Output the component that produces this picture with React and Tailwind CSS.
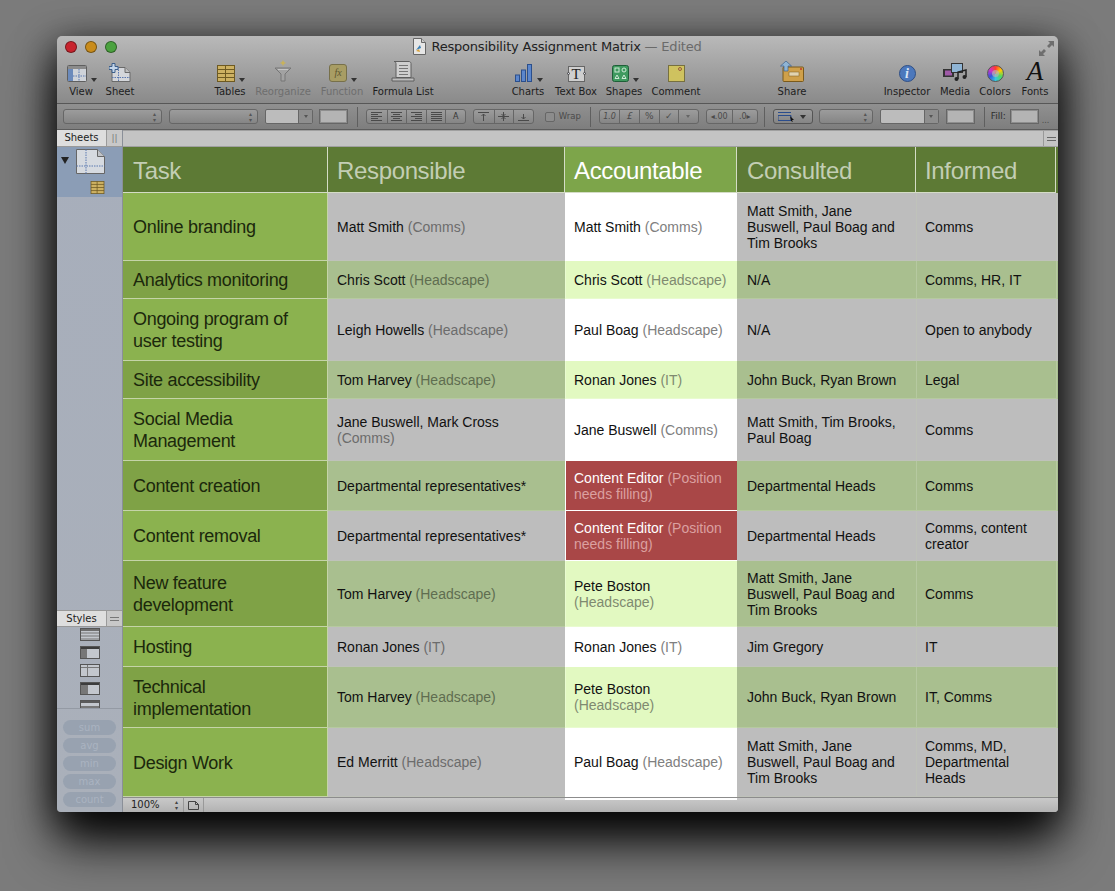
import React from "react";

const uiFont = "font-['DejaVu_Sans',sans-serif]";

const rows = [
  { h: "h-[68px]", task: ["Online branding"], resp: ["Matt Smith", "(Comms)"], acc: ["Matt Smith", "(Comms)"], cons: "Matt Smith, Jane Buswell, Paul Boag and Tim Brooks", inf: "Comms" },
  { h: "h-[38px]", task: ["Analytics monitoring"], resp: ["Chris Scott", "(Headscape)"], acc: ["Chris Scott", "(Headscape)"], cons: "N/A", inf: "Comms, HR, IT" },
  { h: "h-[62px]", task: ["Ongoing program of", "user testing"], resp: ["Leigh Howells", "(Headscape)"], acc: ["Paul Boag", "(Headscape)"], cons: "N/A", inf: "Open to anybody" },
  { h: "h-[38px]", task: ["Site accessibility"], resp: ["Tom Harvey", "(Headscape)"], acc: ["Ronan Jones", "(IT)"], cons: "John Buck, Ryan Brown", inf: "Legal" },
  { h: "h-[62px]", task: ["Social Media", "Management"], resp: ["Jane Buswell, Mark Cross", "(Comms)"], acc: ["Jane Buswell", "(Comms)"], cons: "Matt Smith, Tim Brooks, Paul Boag", inf: "Comms" },
  { h: "h-[50px]", task: ["Content creation"], resp: ["Departmental representatives*", ""], acc: ["Content Editor", "(Position", "needs filling)"], red: true, cons: "Departmental Heads", inf: "Comms" },
  { h: "h-[50px]", task: ["Content removal"], resp: ["Departmental representatives*", ""], acc: ["Content Editor", "(Position", "needs filling)"], red: true, cons: "Departmental Heads", inf: "Comms, content creator" },
  { h: "h-[66px]", task: ["New feature", "development"], resp: ["Tom Harvey", "(Headscape)"], acc: ["Pete Boston", "(Headscape)"], cons: "Matt Smith, Jane Buswell, Paul Boag and Tim Brooks", inf: "Comms" },
  { h: "h-[40px]", task: ["Hosting"], resp: ["Ronan Jones", "(IT)"], acc: ["Ronan Jones", "(IT)"], cons: "Jim Gregory", inf: "IT" },
  { h: "h-[61px]", task: ["Technical", "implementation"], resp: ["Tom Harvey", "(Headscape)"], acc: ["Pete Boston", "(Headscape)"], cons: "John Buck, Ryan Brown", inf: "IT, Comms" },
  { h: "h-[69px]", task: ["Design Work"], resp: ["Ed Merritt", "(Headscape)"], acc: ["Paul Boag", "(Headscape)"], cons: "Matt Smith, Jane Buswell, Paul Boag and Tim Brooks", inf: "Comms, MD, Departmental Heads" },
];

const cols = "grid grid-cols-[205px_237px_172px_179px_140px_2px]";

function Traffic({ className }) {
  return <span className={`w-[12px] h-[12px] rounded-full border border-black/40 ${className}`} />;
}

function DocIcon() {
  return (
    <svg width="13" height="17" viewBox="0 0 13 17">
      <path d="M.5.5h8l4 4v12H.5z" fill="#e6e6e6" stroke="#666" />
      <path d="M8.5.5v4h4" fill="#ccc" stroke="#666" />
      <path d="M3 12l4-5 1 3z" fill="#3a7fb5" />
      <path d="M3 13l3-2 1 3z" fill="#d9a13a" />
    </svg>
  );
}

function Caret() {
  return <span className="w-0 h-0 border-x-[3.5px] border-x-transparent border-t-[4px] border-t-[#333]" />;
}

function ViewIcon() {
  return (
    <svg width="20" height="17" viewBox="0 0 20 17">
      <rect x=".5" y=".5" width="19" height="16" rx="1" fill="#cfd3d9" stroke="#5f5f5f" />
      <rect x="1" y="1" width="18" height="3" fill="#8b8b8b" />
      <rect x="1" y="4" width="5" height="12" fill="#6b8abb" />
      <path d="M6 11h13M12 4v12" stroke="#5a78b0" strokeDasharray="1.5 1" />
    </svg>
  );
}

function SheetIcon() {
  return (
    <svg width="22" height="19" viewBox="0 0 22 19">
      <path d="M3 4.500h13l5 5v9H3z" fill="#d4d6da" stroke="#6a6a6a" />
      <path d="M16 4.500v5h5" fill="#bdbdbd" stroke="#6a6a6a" />
      <path d="M3 14.500h18M9.500 4v14" stroke="#5a78b0" strokeDasharray="1.5 1" />
      <path d="M3 .5h3v3h3v3H6v3H3v-3H0v-3h3z" fill="#c4d6ea" stroke="#3d5f8a" />
    </svg>
  );
}

function TablesIcon({ w = 18, h = 17 }) {
  return (
    <svg width={w} height={h} viewBox="0 0 18 17">
      <rect x=".5" y=".5" width="17" height="16" fill="#cdb162" stroke="#6e5a22" />
      <path d="M.5 4.500h17M.5 8.500h17M.5 12.500h17M8.500 .5v16" stroke="#6e5a22" />
    </svg>
  );
}

function FunnelIcon() {
  return (
    <svg width="20" height="22" viewBox="0 0 20 22">
      <path d="M10 0l1 2 2 1-2 1-1 2-1-2-2-1 2-1z" fill="#c9b25a" />
      <path d="M2 8h16l-6 6v7H8v-7z" fill="#a2a2a2" stroke="#767676" />
      <path d="M5 9.500h10" stroke="#c4c4c4" />
    </svg>
  );
}

function FunctionIcon() {
  return (
    <div className="w-[18px] h-[18px] rounded-[3px] bg-[#a89d64] border border-[#77704a] flex items-center justify-center">
      <span className="font-['Liberation_Serif',serif] italic text-[10px] leading-none text-[#5d5630]">fx</span>
    </div>
  );
}

function FormulaListIcon() {
  return (
    <svg width="24" height="21" viewBox="0 0 24 21">
      <path d="M3 .5h15c1 0 2 1 2 2v14H5V2.500C5 1.500 4 .5 3 .5z" fill="#cfcfcf" stroke="#5f5f5f" />
      <path d="M8 4.500h9M8 7.500h9M8 10.500h9M8 13.500h9" stroke="#777" />
      <path d="M1 17h22v3H1z" fill="#bdbdbd" stroke="#5f5f5f" />
    </svg>
  );
}

function ChartsIcon() {
  return (
    <svg width="18" height="18" viewBox="0 0 18 18">
      <rect x=".5" y="11" width="4" height="6.500" fill="#5b86cc" stroke="#2b4f8c" />
      <rect x="6.500" y="6" width="4" height="11.500" fill="#5b86cc" stroke="#2b4f8c" />
      <rect x="12.500" y=".5" width="4" height="17" fill="#5b86cc" stroke="#2b4f8c" />
    </svg>
  );
}

function TextBoxIcon() {
  return (
    <div className="relative w-[17px] h-[16px] bg-[#cfcfcf] border border-[#666] flex items-center justify-center">
      <span className="font-['Liberation_Serif',serif] text-[15px] leading-none text-[#222]">T</span>
      <span className="absolute -left-[2px] top-[5px] w-[3px] h-[3px] rounded-full bg-[#dde] border-[0.5px] border-[#444]" />
      <span className="absolute -right-[2px] top-[5px] w-[3px] h-[3px] rounded-full bg-[#dde] border-[0.5px] border-[#444]" />
    </div>
  );
}

function ShapesIcon() {
  return (
    <svg width="17" height="17" viewBox="0 0 17 17">
      <rect x=".5" y=".5" width="16" height="16" rx="2" fill="#3f9a5f" stroke="#1f5f38" />
      <rect x="3" y="3" width="4" height="4" fill="none" stroke="#cfe9d6" />
      <circle cx="12" cy="5" r="2" fill="none" stroke="#cfe9d6" />
      <path d="M5 10l2 3.500H3zM12 10l2 3.500h-4z" fill="none" stroke="#cfe9d6" />
    </svg>
  );
}

function CommentIcon() {
  return (
    <div className="relative w-[17px] h-[17px] bg-[#cfc25f] border border-[#77703f]">
      <span className="absolute top-[1px] right-[2px] w-[4px] h-[4px] rounded-full border border-[#9a5a3a]" />
    </div>
  );
}

function ShareIcon() {
  return (
    <svg width="24" height="21" viewBox="0 0 24 21">
      <rect x="3" y="6" width="20.500" height="14.500" rx="1" fill="#cfa04a" stroke="#7a5a1c" />
      <rect x="9" y="11" width="10" height="4" fill="#e2d4b0" stroke="#7a5a1c" strokeWidth=".5" />
      <circle cx="21" cy="8" r="1" fill="#c0392b" />
      <path d="M6 0l5.500 5H8v5H4V5H.5z" fill="#8fb4d4" stroke="#3d5f8a" strokeWidth=".7" />
    </svg>
  );
}

function InspectorIcon() {
  return (
    <div className="w-[17px] h-[17px] rounded-full bg-[#4c78bc] border border-[#2f4f85] flex items-center justify-center">
      <span className="font-['Liberation_Serif',serif] italic font-bold text-[14px] leading-none text-[#dbe6f5]">i</span>
    </div>
  );
}

function MediaIcon() {
  return (
    <svg width="25" height="19" viewBox="0 0 25 19">
      <rect x="0" y="6" width="11" height="8" fill="#333" />
      <rect x="2" y="7.500" width="7" height="5" fill="#a05aa8" />
      <rect x="8.500" y=".5" width="11" height="9" fill="#8fb4d4" stroke="#333" />
      <path d="M15 16V9l8-2v7" fill="none" stroke="#222" strokeWidth="1.500" />
      <circle cx="13.500" cy="16" r="2" fill="#222" />
      <circle cx="21.500" cy="14" r="2" fill="#222" />
    </svg>
  );
}

function ColorsIcon() {
  return (
    <div className="w-[17px] h-[17px] rounded-full border border-[#555] bg-[conic-gradient(#ff3b30,#ffcc00,#4cd964,#34c8e0,#3355dd,#cc33cc,#ff3b30)] flex items-center justify-center">
      <span className="w-[7px] h-[7px] rounded-full bg-[#b5b5b5]/70" />
    </div>
  );
}

function FontsIcon() {
  return <span className="font-['Liberation_Serif',serif] italic text-[27px] leading-[22px] text-[#111]">A</span>;
}

const toolbar = [
  { label: "View", w: "w-[40px]", icon: <ViewIcon />, caret: true },
  { label: "Sheet", w: "w-[38px]", icon: <SheetIcon /> },
  { label: "Tables", w: "w-[50px] ml-[66px]", icon: <TablesIcon />, caret: true },
  { label: "Reorganize", w: "w-[56px]", icon: <FunnelIcon />, off: true },
  { label: "Function", w: "w-[62px]", icon: <FunctionIcon />, caret: true, off: true },
  { label: "Formula List", w: "w-[60px]", icon: <FormulaListIcon /> },
  { label: "Charts", w: "w-[48px] ml-[71px]", icon: <ChartsIcon />, caret: true },
  { label: "Text Box", w: "w-[48px]", icon: <TextBoxIcon /> },
  { label: "Shapes", w: "w-[48px]", icon: <ShapesIcon />, caret: true },
  { label: "Comment", w: "w-[56px]", icon: <CommentIcon /> },
  { label: "Share", w: "w-[50px] ml-[63px]", icon: <ShareIcon /> },
  { label: "Inspector", w: "w-[56px] ml-[62px]", icon: <InspectorIcon /> },
  { label: "Media", w: "w-[40px]", icon: <MediaIcon /> },
  { label: "Colors", w: "w-[40px]", icon: <ColorsIcon /> },
  { label: "Fonts", w: "w-[40px]", icon: <FontsIcon /> },
];

function ToolItem({ item }) {
  return (
    <div className={`${item.w} flex flex-col items-center shrink-0`}>
      <div className="h-[22px] flex items-end justify-center">
        <div className={`relative flex ${item.caret ? "mr-[8px]" : ""}`}>
          {item.icon}
          {item.caret && <span className="absolute left-full ml-[4px] bottom-[0px] flex"><Caret /></span>}
        </div>
      </div>
      <span className={`mt-[3px] text-[10px] leading-[14px] whitespace-nowrap ${item.off ? "text-[#6e6e6e]" : "text-[#1d1d1d]"}`}>{item.label}</span>
    </div>
  );
}

function Select({ w }) {
  return (
    <div className={`${w} h-[15px] rounded-[3px] border border-[#666] bg-gradient-to-b from-[#9c9c9c] to-[#858585] flex items-center justify-end pr-[5px]`}>
      <span className="text-[6px] leading-[6px] text-[#555] flex flex-col items-center">
        <span>▴</span>
        <span>▾</span>
      </span>
    </div>
  );
}

function Combo({ w }) {
  return (
    <div className={`${w} h-[15px] rounded-[2px] border border-[#666] bg-[#bcbcbc] flex justify-end`}>
      <div className="w-[14px] h-full bg-[#8e8e8e] border-l border-[#666] flex items-center justify-center">
        <span className="w-0 h-0 border-x-[2.500px] border-x-transparent border-t-[3px] border-t-[#555]" />
      </div>
    </div>
  );
}

function Box() {
  return <div className="w-[29px] h-[15px] border border-[#666] bg-[#b4b4b4] shadow-[inset_0_0_0_1px_#8e8e8e]" />;
}

function Sep() {
  return <div className="w-px h-[20px] bg-[#5f5f5f]" />;
}

function Seg({ children, w = "w-[19.6px]" }) {
  return (
    <div className={`${w} h-full flex items-center justify-center border-l border-[#666] first:border-l-0 text-[9px] text-[#4a4a4a]`}>
      {children}
    </div>
  );
}

function Segments({ children }) {
  return <div className="h-[15px] flex rounded-[3px] border border-[#666] bg-gradient-to-b from-[#9c9c9c] to-[#858585]">{children}</div>;
}

function AlignGlyph({ d }) {
  return (
    <svg width="11" height="9" viewBox="0 0 11 9">
      <path d={d} stroke="#4a4a4a" fill="none" />
    </svg>
  );
}

function FormatBar() {
  return (
    <div className={`h-[26px] shrink-0 pl-[6px] flex items-center bg-gradient-to-b from-[#909090] to-[#7e7e7e] border-b border-[#5c5c5c] ${uiFont}`}>
      <Select w="w-[99px]" />
      <div className="ml-[7px]"><Select w="w-[89px]" /></div>
      <div className="ml-[7px]"><Combo w="w-[48px]" /></div>
      <div className="ml-[6px]"><Box /></div>
      <div className="ml-[9px]"><Sep /></div>
      <div className="ml-[8px]">
        <Segments>
          <Seg><AlignGlyph d="M0 .5h11M0 2.500h7M0 4.500h11M0 6.500h7M0 8.500h11" /></Seg>
          <Seg><AlignGlyph d="M0 .5h11M2 2.500h7M0 4.500h11M2 6.500h7M0 8.500h11" /></Seg>
          <Seg><AlignGlyph d="M0 .5h11M4 2.500h7M0 4.500h11M4 6.500h7M0 8.500h11" /></Seg>
          <Seg><AlignGlyph d="M0 .5h11M0 2.500h11M0 4.500h11M0 6.500h11M0 8.500h11" /></Seg>
          <Seg><span className="text-[8px] leading-none text-[#333]">A</span></Seg>
        </Segments>
      </div>
      <div className="ml-[7px]">
        <Segments>
          <Seg><AlignGlyph d="M0 .5h11M5.500 2v7M3.500 4l2-2 2 2" /></Seg>
          <Seg><AlignGlyph d="M0 4.500h11M5.500 0v9M3.500 2l2 2 2-2M3.500 7l2-2 2 2" /></Seg>
          <Seg><AlignGlyph d="M0 8.500h11M5.500 2v5M3.500 5l2 2 2-2" /></Seg>
        </Segments>
      </div>
      <div className="ml-[11px] w-[10px] h-[10px] rounded-[2px] border border-[#666] bg-[#8c8c8c]" />
      <span className="ml-[4px] w-[23px] text-[8.5px] leading-none text-[#4a4a4a]">Wrap</span>
      <div className="ml-[8px]"><Sep /></div>
      <div className="ml-[8px]">
        <Segments>
          <Seg><span className="italic text-[8px]">1.0</span></Seg>
          <Seg><span className="italic">£</span></Seg>
          <Seg>%</Seg>
          <Seg>✓</Seg>
          <Seg><span className="w-0 h-0 border-x-[2.500px] border-x-transparent border-t-[3px] border-t-[#666]" /></Seg>
        </Segments>
      </div>
      <div className="ml-[7px]">
        <Segments>
          <Seg w="w-[25px]"><span className="text-[8px]">◂.00</span></Seg>
          <Seg w="w-[25px]"><span className="text-[8px]">.0▸</span></Seg>
        </Segments>
      </div>
      <div className="ml-[6px]"><Sep /></div>
      <div className="ml-[8px] w-[40px] h-[15px] rounded-[3px] border border-[#555] bg-gradient-to-b from-[#9c9c9c] to-[#858585] flex items-center justify-between pl-[4px] pr-[6px]">
        <svg width="18" height="10" viewBox="0 0 18 10">
          <path d="M0 .5h13" stroke="#2b4d8c" />
          <path d="M0 3.500h13v5H0z" stroke="#2b4d8c" fill="none" />
          <path d="M12 4l4 4h-2l1 2-2-1z" fill="#111" />
        </svg>
        <Caret />
      </div>
      <div className="ml-[6px]"><Select w="w-[54px]" /></div>
      <div className="ml-[7px]"><Combo w="w-[59px]" /></div>
      <div className="ml-[7px]"><Box /></div>
      <div className="ml-[9px]"><Sep /></div>
      <span className="ml-[6px] w-[19px] text-[9px] leading-none text-[#2c2c2c]">Fill:</span>
      <Box />
      <span className="ml-[3px] mt-[8px] text-[8px] leading-none text-[#4a4a4a]">...</span>
    </div>
  );
}

function StyleThumb({ d, head }) {
  return (
    <svg width="20" height="13" viewBox="0 0 20 13" className="shrink-0">
      <rect x=".5" y=".5" width="19" height="12" fill="#c3c7cd" stroke="#555" />
      <rect x="1" y="1" width="18" height="2" fill={head} />
      <path d={d} fill="#777" />
    </svg>
  );
}

function Sidebar() {
  return (
    <div className={`w-[66px] shrink-0 flex flex-col border-r border-[#8a8f98] bg-gradient-to-b from-[#a7aebb] to-[#aab0ba] ${uiFont}`}>
      <div className="h-[17px] shrink-0 flex bg-[#c8c8c8] border-b border-[#999]">
        <div className="w-[50px] bg-[#dedede] border-r border-[#9a9a9a] flex items-center justify-center text-[10px] leading-none text-[#222]">Sheets</div>
        <div className="flex-1 flex items-center justify-center text-[9px] leading-none text-[#777]">||</div>
      </div>
      <div className="h-[50px] shrink-0 bg-[#8b9db6] relative flex pt-[2px] pl-[19px]">
        <span className="absolute left-[4px] top-[10px] w-0 h-0 border-x-[4px] border-x-transparent border-t-[7px] border-t-[#222]" />
        <div className="flex flex-col items-end">
          <svg width="29" height="25" viewBox="0 0 29 25">
            <path d="M.5.5h21l7 7v17H.5z" fill="#d6dae0" stroke="#666" />
            <path d="M21.500.5v7h7" fill="#c0c3c8" stroke="#666" />
            <path d="M.5 17h28M10 .5v24" stroke="#5a78b0" strokeDasharray="1.500 1" />
          </svg>
          <div className="mt-[7px] flex"><TablesIcon w={15} h={13} /></div>
        </div>
      </div>
      <div className="flex-1" />
      <div className="h-[17px] shrink-0 flex bg-[#c8c8c8] border-y border-[#999]">
        <div className="w-[50px] bg-[#dedede] border-r border-[#9a9a9a] flex items-center justify-center text-[10px] leading-none text-[#222]">Styles</div>
        <div className="flex-1 flex flex-col items-center justify-center gap-[2px]">
          <span className="w-[9px] h-px bg-[#777]" />
          <span className="w-[9px] h-px bg-[#777]" />
        </div>
      </div>
      <div className="h-[82px] shrink-0 pt-[1px] flex flex-col items-center gap-[5px] overflow-hidden border-b border-[#949aa4]">
        <StyleThumb head="#6e6e6e" d="M1 4.500h18v1H1zM1 7.500h18v1H1zM1 10.500h18v1H1z" />
        <StyleThumb head="#3c3c3c" d="M1 3h6v9H1z" />
        <StyleThumb head="#c3c7cd" d="M1 3h18v1H1zM7 1h1v11H7z" />
        <StyleThumb head="#3c3c3c" d="M1 3h7v9H1z" />
        <StyleThumb head="#5a5a5a" d="M1 6h18v2H1z" />
      </div>
      <div className="h-[103px] shrink-0 pt-[11px] flex flex-col items-center gap-[3px]">
        {["sum", "avg", "min", "max", "count"].map((f) => (
          <div key={f} className="w-[53px] h-[15px] rounded-full bg-[#98a2b0] flex items-center justify-center text-[10px] leading-none text-[#aab3c0]">
            {f}
          </div>
        ))}
      </div>
    </div>
  );
}

function Who({ parts, grey }) {
  return (
    <>
      {parts[0]}
      {parts[1] ? <span className={grey}> {parts[1]}</span> : null}
      {parts[2] ? <span className={`block ${grey}`}>{parts[2]}</span> : null}
    </>
  );
}

function Row({ row, index }) {
  const alt = index % 2 === 1;
  const task = alt ? "bg-[#7fa246]" : "bg-[#8bb24f]";
  const cell = alt ? "bg-[#a9bf8f] border-[#b6c9a0]" : "bg-[#bdbdbd] border-[#bfc2ba]";
  const acc = row.red ? "bg-[#a94747] text-white border-white" : alt ? "bg-[#e2f9c1] border-[#e9fbd0]" : "bg-white border-white";
  const accGrey = row.red ? "text-[#dba0a0]" : alt ? "text-[#7f8a70]" : "text-[#808080]";
  const grey = alt ? "text-[#5f6d50]" : "text-[#6c6c6c]";
  const base = "flex items-center border-b";
  return (
    <div className={`${cols} ${row.h} text-[14px] leading-[16px] text-[#111]`}>
      <div className={`${base} ${task} border-r border-[#c5d4a8] pl-[10px] pr-[9px] pt-[1px] text-[18px] leading-[22px] tracking-[-0.3px] text-[#1b280c]`}>
        <span>
          {row.task.map((t) => (
            <span key={t} className="block whitespace-nowrap">{t}</span>
          ))}
        </span>
      </div>
      <div className={`${base} ${cell} px-[9px]`}>
        <span><Who parts={row.resp} grey={grey} /></span>
      </div>
      <div className={`${base} ${acc} border-l pl-[8px] pr-[4px]`}>
        <span><Who parts={row.acc} grey={accGrey} /></span>
      </div>
      <div className={`${base} ${cell} px-[10px]`}>
        <span>{row.cons}</span>
      </div>
      <div className={`${base} ${cell} border-l pl-[8px] pr-[9px]`}>
        <span>{row.inf}</span>
      </div>
      <div className={`${cell} border-l`} />
    </div>
  );
}

function Sheet() {
  const heads = ["Task", "Responsible", "Accountable", "Consulted", "Informed"];
  return (
    <div className="flex-1 min-w-0 flex flex-col bg-[#bdbdbd] font-['Liberation_Sans',sans-serif]">
      <div className="h-[17px] shrink-0 flex justify-end bg-[#c4c4c4] border-y border-[#a0a0a0]">
        <div className="w-[15px] border-l border-[#999] flex flex-col items-center justify-center gap-[2px]">
          <span className="w-[9px] h-px bg-[#666]" />
          <span className="w-[9px] h-px bg-[#666]" />
        </div>
      </div>
      <div className="flex-1 min-h-0 overflow-hidden">
        <div className={`${cols} h-[46px] text-[24px] leading-none tracking-[-0.35px]`}>
          {heads.map((h) => (
            <div
              key={h}
              className={`flex items-center pt-[2px] border-r border-b border-[#d4dcc6] ${h === "Task" || h === "Consulted" ? "px-[10px]" : "px-[9px]"} ${h === "Accountable" ? "bg-[#7da54a] text-white" : "bg-[#5d7a35] text-[#c3ceb4]"}`}
            >
              {h}
            </div>
          ))}
          <div className="bg-[#5d7a35]" />
        </div>
        {rows.map((row, i) => (
          <Row key={i} row={row} index={i} />
        ))}
        <div className={`${cols} h-[4px]`}>
          <div className="bg-[#7fa246]" />
          <div />
          <div className="bg-white" />
        </div>
      </div>
      <div className={`relative h-[15px] shrink-0 flex items-stretch bg-gradient-to-b from-[#c9c9c9] to-[#b2b2b2] border-t border-[#8c8c8c] ${uiFont}`}>
        <div className="w-[61px] pl-[8px] pr-[5px] flex items-center justify-between border-r border-[#999] text-[10px] leading-none text-[#222]">
          100%
          <span className="text-[6px] leading-[6px] text-[#444] flex flex-col">
            <span>▴</span>
            <span>▾</span>
          </span>
        </div>
        <div className="w-[20px] border-r border-[#999] flex items-center justify-center">
          <svg width="11" height="9" viewBox="0 0 11 9">
            <path d="M.5.5h7l3 3v5H.5z" fill="none" stroke="#444" />
            <path d="M7.500.5v3h3" fill="none" stroke="#444" />
          </svg>
        </div>
        <div className="absolute left-[442px] top-0 w-[172px] h-[2px] bg-white" />
      </div>
    </div>
  );
}

export default function App() {
  return (
    <div className="h-[891px] overflow-hidden bg-[#7b7b7b] pt-[36px] pl-[57px]">
      <div className="w-[1001px] h-[776px] flex flex-col rounded-t-[5px] rounded-b-[4px] overflow-hidden shadow-[0_30px_50px_rgba(0,0,0,0.9),0_8px_38px_rgba(0,0,0,0.7)]">
        <div className={`h-[68px] shrink-0 bg-gradient-to-b from-[#b9b9b9] to-[#8a8a8a] border-b border-[#575757] ${uiFont}`}>
          <div className="h-[21px] grid grid-cols-[1fr_auto_1fr] items-center">
            <div className="pl-[8px] flex gap-[8px]">
              <Traffic className="bg-[#c8242e]" />
              <Traffic className="bg-[#c98c1c]" />
              <Traffic className="bg-[#4ba23f]" />
            </div>
            <div className="flex items-center gap-[5px] text-[13px] tracking-[-0.2px] leading-none">
              <DocIcon />
              <span className="text-[#222] whitespace-nowrap">
                Responsibility Assignment Matrix <span className="text-[#6a6a6a]">— Edited</span>
              </span>
            </div>
            <div className="flex justify-end pr-[4px] pt-[3px]">
              <svg width="15" height="15" viewBox="0 0 15 15">
                <path d="M15 0H9l2 2-3 3 2 2 3-3 2 2zM0 15h6l-2-2 3-3-2-2-3 3-2-2z" fill="#6e6e6e" />
              </svg>
            </div>
          </div>
          <div className="flex pl-[4px] pt-[3px]">
            {toolbar.map((t) => (
              <ToolItem key={t.label} item={t} />
            ))}
          </div>
        </div>
        <FormatBar />
        <div className="flex-1 min-h-0 flex">
          <Sidebar />
          <Sheet />
        </div>
      </div>
    </div>
  );
}
